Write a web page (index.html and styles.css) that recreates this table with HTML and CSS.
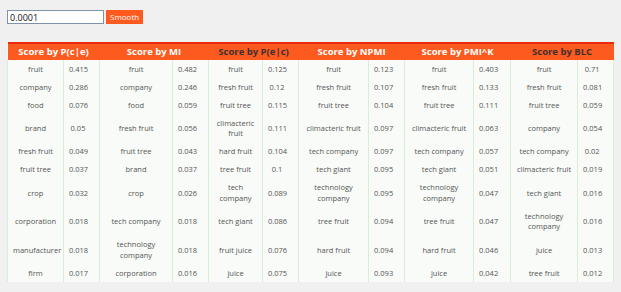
FILE: index.html
```html
<!DOCTYPE html>
<html>
<head>
<meta charset="utf-8">
<link rel="stylesheet" href="styles.css">
</head>
<body>
<div class="controls">
  <input class="smooth-input" type="text" value="0.0001">
  <button class="btn-smooth">Smooth</button>
</div>
<table class="scores">
  <colgroup>
    <col class="c-w56"><col class="c-v"><col class="c-w73"><col class="c-v"><col class="c-w54"><col class="c-v">
    <col class="c-w70"><col class="c-v"><col class="c-w69"><col class="c-v37"><col class="c-w67"><col class="c-v">
  </colgroup>
  <thead>
    <tr>
      <th colspan="2">Score by P(c|e)</th>
      <th colspan="2">Score by MI</th>
      <th colspan="2" class="dark">Score by P(e|c)</th>
      <th colspan="2">Score by NPMI</th>
      <th colspan="2">Score by PMI^K</th>
      <th colspan="2" class="dark">Score by BLC</th>
    </tr>
  </thead>
  <tbody>
    <tr><td>fruit</td><td class="v">0.415</td><td>fruit</td><td class="v">0.482</td><td>fruit</td><td class="v">0.125</td><td>fruit</td><td class="v">0.123</td><td>fruit</td><td class="v">0.403</td><td>fruit</td><td class="v">0.71</td></tr>
    <tr><td>company</td><td class="v">0.286</td><td>company</td><td class="v">0.246</td><td>fresh fruit</td><td class="v">0.12</td><td>fresh fruit</td><td class="v">0.107</td><td>fresh fruit</td><td class="v">0.133</td><td>fresh fruit</td><td class="v">0.081</td></tr>
    <tr><td>food</td><td class="v">0.076</td><td>food</td><td class="v">0.059</td><td>fruit tree</td><td class="v">0.115</td><td>fruit tree</td><td class="v">0.104</td><td>fruit tree</td><td class="v">0.111</td><td>fruit tree</td><td class="v">0.059</td></tr>
    <tr><td>brand</td><td class="v">0.05</td><td>fresh fruit</td><td class="v">0.056</td><td>climacteric fruit</td><td class="v">0.111</td><td>climacteric fruit</td><td class="v">0.097</td><td>climacteric fruit</td><td class="v">0.063</td><td>company</td><td class="v">0.054</td></tr>
    <tr><td>fresh fruit</td><td class="v">0.049</td><td>fruit tree</td><td class="v">0.043</td><td>hard fruit</td><td class="v">0.104</td><td>tech company</td><td class="v">0.097</td><td>tech company</td><td class="v">0.057</td><td>tech company</td><td class="v">0.02</td></tr>
    <tr><td>fruit tree</td><td class="v">0.037</td><td>brand</td><td class="v">0.037</td><td>tree fruit</td><td class="v">0.1</td><td>tech giant</td><td class="v">0.095</td><td>tech giant</td><td class="v">0.051</td><td>climacteric fruit</td><td class="v">0.019</td></tr>
    <tr><td>crop</td><td class="v">0.032</td><td>crop</td><td class="v">0.026</td><td>tech company</td><td class="v">0.089</td><td>technology company</td><td class="v">0.095</td><td>technology company</td><td class="v">0.047</td><td>tech giant</td><td class="v">0.016</td></tr>
    <tr><td>corporation</td><td class="v">0.018</td><td>tech company</td><td class="v">0.018</td><td>tech giant</td><td class="v">0.086</td><td>tree fruit</td><td class="v">0.094</td><td>tree fruit</td><td class="v">0.047</td><td>technology company</td><td class="v">0.016</td></tr>
    <tr><td>manufacturer</td><td class="v">0.018</td><td>technology company</td><td class="v">0.018</td><td>fruit juice</td><td class="v">0.076</td><td>hard fruit</td><td class="v">0.094</td><td>hard fruit</td><td class="v">0.046</td><td>juice</td><td class="v">0.013</td></tr>
    <tr><td>firm</td><td class="v">0.017</td><td>corporation</td><td class="v">0.016</td><td>juice</td><td class="v">0.075</td><td>juice</td><td class="v">0.093</td><td>juice</td><td class="v">0.042</td><td>tree fruit</td><td class="v">0.012</td></tr>
  </tbody>
</table>
</body>
</html>
```

FILE: styles.css
```css
html, body {
  margin: 0;
  background: #f0f0f0;
}
body {
  padding: 10px 8px 0 7px;
  font-family: "Open Sans", "Noto Sans", sans-serif;
}
.controls {
  display: flex;
  align-items: center;
  gap: 2px;
  margin-bottom: 18px;
}
.smooth-input {
  box-sizing: border-box;
  width: 97px;
  height: 14px;
  margin: 0;
  padding: 0 2px;
  border: 1px solid #7d93ad;
  background: #fff;
  font-family: "Open Sans", sans-serif;
  font-size: 9px;
  color: #111;
  outline: none;
}
.btn-smooth {
  height: 14px;
  margin: 0;
  padding: 0 4px;
  border: none;
  background: #fd5a1f;
  color: #fff;
  font-family: "Open Sans", sans-serif;
  font-size: 8px;
  line-height: 14px;
}
.scores {
  border-collapse: collapse;
  table-layout: fixed;
  width: 606px;
  background: #f8fbf8;
  font-size: 7.5px;
  color: #555;
}
.c-w56 { width: 56px; }
.c-w73 { width: 73px; }
.c-w54 { width: 54px; }
.c-w70 { width: 70px; }
.c-w69 { width: 69px; }
.c-w67 { width: 67px; }
.c-v { width: 36px; }
.c-v37 { width: 37px; }
.scores thead tr {
  border-top: 2px solid #ee2a0c;
}
.scores th {
  background: #fd5a1f;
  color: #fff;
  font-size: 9.5px;
  font-weight: bold;
  height: 16px;
  padding: 0;
  line-height: 16px;
  white-space: nowrap;
}
.scores th.dark {
  color: #3d3030;
}
.scores td {
  border-left: 1px solid #d6efd6;
  border-right: 1px solid #d6efd6;
  padding: 3.75px 5px;
  line-height: 10.5px;
  text-align: center;
}
.scores td.v {
  padding-right: 12px;
}
```
